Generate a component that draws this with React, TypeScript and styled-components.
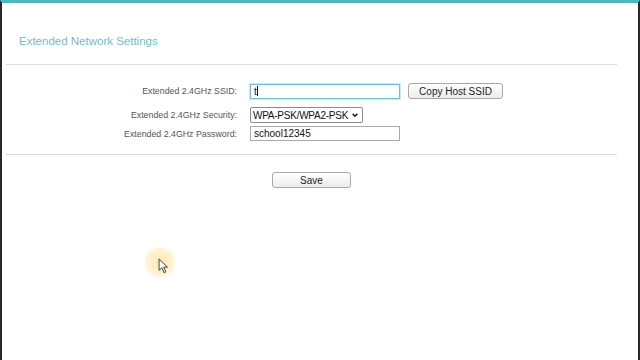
import styled, { createGlobalStyle } from 'styled-components';

const GlobalStyle = createGlobalStyle`
  html, body {
    margin: 0;
    padding: 0;
    background: #fff;
  }
  body {
    font-family: "Liberation Sans", Arial, sans-serif;
  }
`;

type Field = { label: string; top: number; kind: 'text' | 'select'; value: string; focused?: boolean; extra?: string };

const fields: Field[] = [
  { label: 'Extended 2.4GHz SSID:', top: 0, kind: 'text', value: 't', focused: true, extra: 'Copy Host SSID' },
  { label: 'Extended 2.4GHz Security:', top: 8, kind: 'select', value: 'WPA-PSK/WPA2-PSK' },
  { label: 'Extended 2.4GHz Password:', top: 3, kind: 'text', value: 'school12345' },
];

export default function App() {
  return (
    <>
      <GlobalStyle />
      <Frame>
        <Header>
          <Title>Extended Network Settings</Title>
        </Header>
        <Content>
          <Divider />
          <Form>
            {fields.map((f) => (
              <Row key={f.label} $top={f.top}>
                <Label>{f.label}</Label>
                <Controls>
                  {f.kind === 'text' ? (
                    <TextBox $focused={f.focused}>
                      {f.value}
                      {f.focused && <Caret />}
                    </TextBox>
                  ) : (
                    <SelectBox>
                      {f.value}
                      <Chevron viewBox="0 0 10 10">
                        <path d="M2 3.5 L5 6.5 L8 3.5" fill="none" stroke="#111" strokeWidth="1.8" />
                      </Chevron>
                    </SelectBox>
                  )}
                  {f.extra && <Button $width={95}>{f.extra}</Button>}
                </Controls>
              </Row>
            ))}
          </Form>
          <Divider />
          <Actions>
            <Button $width={79}>Save</Button>
          </Actions>
        </Content>
        <Pointer>
          <Halo />
          <Arrow viewBox="0 0 12 18">
            <path d="M1 1 L1 14 L4.2 11 L6.6 16.5 L8.6 15.6 L6.3 10.3 L10.5 10.3 Z" fill="#f4f4f4" stroke="#333" strokeWidth="1" strokeLinejoin="round" />
          </Arrow>
        </Pointer>
      </Frame>
    </>
  );
}

const Frame = styled.div`
  position: relative;
  box-sizing: border-box;
  width: 640px;
  height: 360px;
  border-top: 3px solid #4fb6c3;
  border-left: 2px solid #2a2a2a;
  border-right: 2px solid #2a2a2a;
  background: #fff;
  overflow: hidden;
`;

const Header = styled.div`
  padding: 31px 0 16px 17px;
`;

const Title = styled.h1`
  margin: 0;
  font-size: 11.5px;
  line-height: 14px;
  font-weight: normal;
  color: #72bccb;
`;

const Content = styled.div`
  margin: 0 21px 0 4px;
`;

const Divider = styled.div`
  height: 1px;
  background: #dcdcdc;
`;

const Form = styled.div`
  display: flex;
  flex-direction: column;
  padding: 18px 0 13px;
`;

const Row = styled.div<{ $top: number }>`
  display: grid;
  grid-template-columns: 231px 1fr;
  column-gap: 13px;
  align-items: center;
  margin-top: ${(p) => p.$top}px;
`;

const Label = styled.span`
  text-align: right;
  font-size: 8.8px;
  color: #555;
  white-space: nowrap;
`;

const Controls = styled.div`
  display: flex;
  align-items: center;
  gap: 8px;
`;

const TextBox = styled.div<{ $focused?: boolean }>`
  display: flex;
  align-items: center;
  box-sizing: border-box;
  width: 150px;
  height: 15px;
  padding: 0 3px;
  border: 1px solid ${(p) => (p.$focused ? '#6cc3cf' : '#a9a9a9')};
  box-shadow: ${(p) => (p.$focused ? '0 0 0 1px #c9eaef' : 'none')};
  font-size: 10px;
  color: #111;
  white-space: nowrap;
`;

const Caret = styled.span`
  width: 1px;
  height: 10px;
  background: #111;
`;

const SelectBox = styled.div`
  position: relative;
  display: flex;
  align-items: center;
  box-sizing: border-box;
  width: 113px;
  height: 16px;
  padding: 0 13px 0 2px;
  border: 1px solid #8a8a8a;
  border-radius: 2px;
  font-size: 10px;
  letter-spacing: -0.25px;
  color: #111;
  white-space: nowrap;
  overflow: hidden;
`;

const Chevron = styled.svg`
  position: absolute;
  right: 3px;
  top: 3px;
  width: 8px;
  height: 8px;
`;

const Button = styled.div<{ $width: number }>`
  box-sizing: border-box;
  width: ${(p) => p.$width}px;
  height: 16px;
  display: flex;
  align-items: center;
  justify-content: center;
  border: 1px solid #a8a8a8;
  border-radius: 3px;
  background: linear-gradient(#ffffff, #ececec);
  font-size: 10px;
  color: #222;
  white-space: nowrap;
`;

const Actions = styled.div`
  display: flex;
  justify-content: center;
  padding-top: 17px;
`;

const Pointer = styled.div`
  position: absolute;
  left: 143px;
  top: 244px;
  width: 30px;
  height: 30px;
`;

const Halo = styled.div`
  position: absolute;
  inset: 0;
  border-radius: 50%;
  background: radial-gradient(circle, rgba(255, 226, 150, 0.8) 0%, rgba(255, 232, 170, 0.55) 55%, rgba(255, 240, 200, 0) 100%);
`;

const Arrow = styled.svg`
  position: absolute;
  left: 13px;
  top: 11px;
  width: 11px;
  height: 16px;
`;
